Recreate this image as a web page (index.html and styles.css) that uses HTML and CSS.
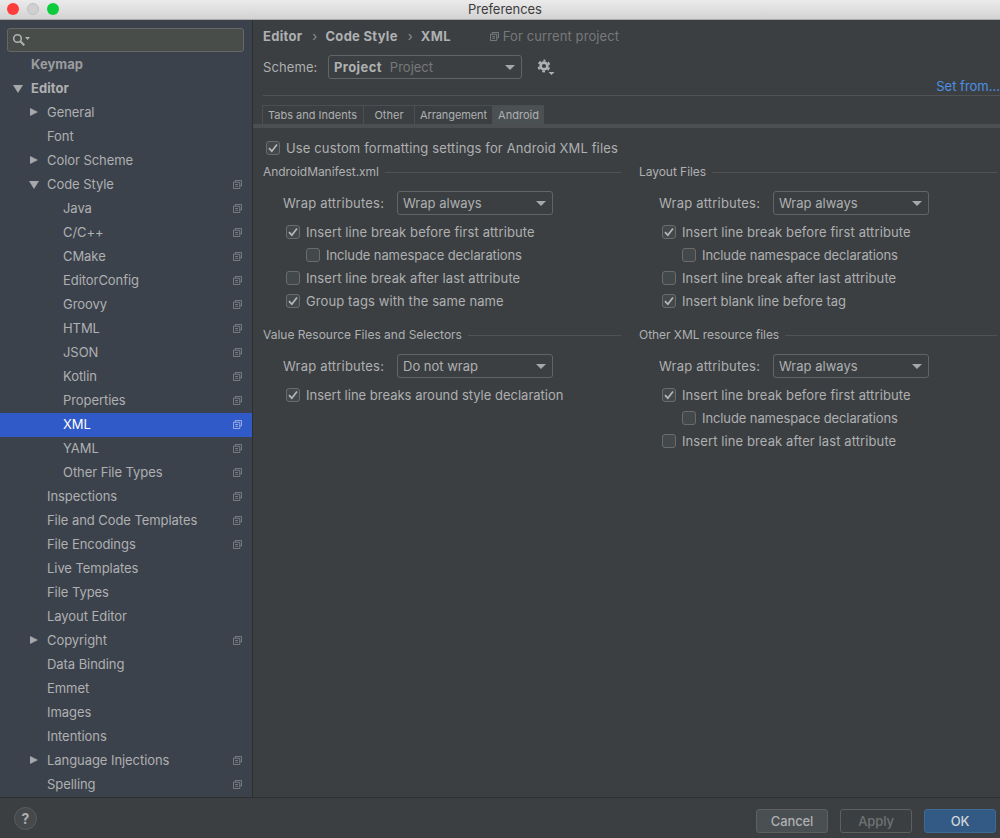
FILE: index.html
```html
<!DOCTYPE html>
<html lang="en">
<head>
    <meta charset="UTF-8">
    <meta name="viewport" content="width=device-width, initial-scale=1.0">
    <title>Preferences</title>
    <link rel="stylesheet" href="styles.css">
</head>
<body>
    <svg class="defs" width="0" height="0">
        <symbol id="copy" viewBox="0 0 10 10">
            <path d="M2.5 2.5V.5h7v6h-2M.5 2.5h7v7h-7zM2.5 5h3M2.5 7h3" fill="none" stroke="currentColor"/>
        </symbol>
        <symbol id="check" viewBox="0 0 14 14">
            <path d="M3 7.2l2.8 3L11 3.4" fill="none" stroke="#b5b7b9" stroke-width="1.7"/>
        </symbol>
    </svg>

    <header class="titlebar">
        <div class="lights">
            <span class="light red"></span>
            <span class="light grey"></span>
            <span class="light green"></span>
        </div>
        <div class="window-title">Preferences</div>
    </header>

    <div class="window-body">
        <aside class="sidebar">
            <div class="search">
                <svg width="18" height="14" viewBox="0 0 18 14">
                    <circle cx="5.5" cy="5.5" r="3.8" fill="none" stroke="#afb1b3" stroke-width="1.6"/>
                    <path d="M8.3 8.3l4 4" stroke="#afb1b3" stroke-width="2"/>
                    <path d="M13 4h5l-2.5 3z" fill="#afb1b3"/>
                </svg>
            </div>
            <ul class="tree">
                <li class="row lvl0 bold clipped">Keymap</li>
                <li class="row lvl0 bold"><i class="arrow down"></i>Editor</li>
                <li class="row lvl1"><i class="arrow"></i>General</li>
                <li class="row lvl1">Font</li>
                <li class="row lvl1"><i class="arrow"></i>Color Scheme</li>
                <li class="row lvl1"><i class="arrow down"></i>Code Style<svg class="copy"><use href="#copy"/></svg></li>
                <li class="row lvl2">Java<svg class="copy"><use href="#copy"/></svg></li>
                <li class="row lvl2">C/C++<svg class="copy"><use href="#copy"/></svg></li>
                <li class="row lvl2">CMake<svg class="copy"><use href="#copy"/></svg></li>
                <li class="row lvl2">EditorConfig<svg class="copy"><use href="#copy"/></svg></li>
                <li class="row lvl2">Groovy<svg class="copy"><use href="#copy"/></svg></li>
                <li class="row lvl2">HTML<svg class="copy"><use href="#copy"/></svg></li>
                <li class="row lvl2">JSON<svg class="copy"><use href="#copy"/></svg></li>
                <li class="row lvl2">Kotlin<svg class="copy"><use href="#copy"/></svg></li>
                <li class="row lvl2">Properties<svg class="copy"><use href="#copy"/></svg></li>
                <li class="row lvl2 selected">XML<svg class="copy"><use href="#copy"/></svg></li>
                <li class="row lvl2">YAML<svg class="copy"><use href="#copy"/></svg></li>
                <li class="row lvl2">Other File Types<svg class="copy"><use href="#copy"/></svg></li>
                <li class="row lvl1">Inspections<svg class="copy"><use href="#copy"/></svg></li>
                <li class="row lvl1">File and Code Templates<svg class="copy"><use href="#copy"/></svg></li>
                <li class="row lvl1">File Encodings<svg class="copy"><use href="#copy"/></svg></li>
                <li class="row lvl1">Live Templates</li>
                <li class="row lvl1">File Types</li>
                <li class="row lvl1">Layout Editor</li>
                <li class="row lvl1"><i class="arrow"></i>Copyright<svg class="copy"><use href="#copy"/></svg></li>
                <li class="row lvl1">Data Binding</li>
                <li class="row lvl1">Emmet</li>
                <li class="row lvl1">Images</li>
                <li class="row lvl1">Intentions</li>
                <li class="row lvl1"><i class="arrow"></i>Language Injections<svg class="copy"><use href="#copy"/></svg></li>
                <li class="row lvl1">Spelling<svg class="copy"><use href="#copy"/></svg></li>
            </ul>
        </aside>

        <main class="content">
            <div class="breadcrumbs">
                <b>Editor</b>
                <span class="crumb-sep">›</span>
                <b>Code Style</b>
                <span class="crumb-sep">›</span>
                <b>XML</b>
                <span class="for-project"><svg class="copy-small"><use href="#copy"/></svg>For current project</span>
            </div>

            <div class="scheme-row">
                <span class="scheme-label">Scheme:</span>
                <div class="combo scheme-combo"><b>Project</b><span class="muted">Project</span></div>
                <svg class="gear" width="20" height="20" viewBox="0 0 20 20">
                    <circle cx="8" cy="9" r="3.4" fill="none" stroke="#afb1b3" stroke-width="2.6"/>
                    <circle cx="8" cy="9" r="5.4" fill="none" stroke="#afb1b3" stroke-width="2" stroke-dasharray="2.8 2.85" stroke-dashoffset="1.4" transform="rotate(-90 8 9)"/>
                    <path fill="#afb1b3" d="M12.5 15h6l-3 3z"/>
                </svg>
            </div>

            <div class="set-from">Set from...</div>

            <div class="tabs">
                <span class="tab tab-first">Tabs and Indents</span>
                <span class="tab tab-other">Other</span>
                <span class="tab tab-arr">Arrangement</span>
                <span class="tab active">Android</span>
            </div>

            <label class="check top-check"><span class="box"><svg width="14" height="14"><use href="#check"/></svg></span>Use custom formatting settings for Android XML files</label>

            <div class="groups">
                <section class="group">
                    <h2 class="group-title">AndroidManifest.xml</h2>
                    <div class="wrap-row"><span class="wrap-label">Wrap attributes:</span><div class="combo wrap-combo">Wrap always</div></div>
                    <label class="check"><span class="box"><svg width="14" height="14"><use href="#check"/></svg></span>Insert line break before first attribute</label>
                    <label class="check nested"><span class="box"></span>Include namespace declarations</label>
                    <label class="check"><span class="box"></span>Insert line break after last attribute</label>
                    <label class="check"><span class="box"><svg width="14" height="14"><use href="#check"/></svg></span>Group tags with the same name</label>
                </section>
                <section class="group">
                    <h2 class="group-title">Layout Files</h2>
                    <div class="wrap-row"><span class="wrap-label">Wrap attributes:</span><div class="combo wrap-combo">Wrap always</div></div>
                    <label class="check"><span class="box"><svg width="14" height="14"><use href="#check"/></svg></span>Insert line break before first attribute</label>
                    <label class="check nested"><span class="box"></span>Include namespace declarations</label>
                    <label class="check"><span class="box"></span>Insert line break after last attribute</label>
                    <label class="check tight"><span class="box"><svg width="14" height="14"><use href="#check"/></svg></span>Insert blank line before tag</label>
                </section>
                <section class="group">
                    <h2 class="group-title tight">Value Resource Files and Selectors</h2>
                    <div class="wrap-row"><span class="wrap-label">Wrap attributes:</span><div class="combo wrap-combo">Do not wrap</div></div>
                    <label class="check tight"><span class="box"><svg width="14" height="14"><use href="#check"/></svg></span>Insert line breaks around style declaration</label>
                </section>
                <section class="group">
                    <h2 class="group-title">Other XML resource files</h2>
                    <div class="wrap-row"><span class="wrap-label">Wrap attributes:</span><div class="combo wrap-combo">Wrap always</div></div>
                    <label class="check"><span class="box"><svg width="14" height="14"><use href="#check"/></svg></span>Insert line break before first attribute</label>
                    <label class="check nested"><span class="box"></span>Include namespace declarations</label>
                    <label class="check"><span class="box"></span>Insert line break after last attribute</label>
                </section>
            </div>
        </main>
    </div>

    <footer class="footer">
        <div class="help">?</div>
        <div class="buttons">
            <button class="btn">Cancel</button>
            <button class="btn btn-disabled">Apply</button>
            <button class="btn btn-primary">OK</button>
        </div>
    </footer>
</body>
</html>
```

FILE: styles.css
```css
* {
    box-sizing: border-box;
}
html, body {
    height: 100%;
}
body {
    margin: 0;
    width: 1000px;
    height: 838px;
    overflow: hidden;
    display: flex;
    flex-direction: column;
    background: #3c3f41;
    color: #aeb0b2;
    font-family: 'Inter', 'Liberation Sans', sans-serif;
    font-size: 13px;
}
.defs {
    position: absolute;
}

/* title bar */
.titlebar {
    height: 20px;
    flex: none;
    display: flex;
    align-items: center;
    background: linear-gradient(#ebebeb, #d3d3d3);
    border-bottom: 1px solid #a9a9a9;
    padding-left: 7px;
}
.lights {
    display: flex;
    gap: 8px;
    width: 60px;
    margin-top: -2px;
}
.light {
    width: 12px;
    height: 12px;
    border-radius: 50%;
}
.red { background: #fc3d39; }
.grey { background: #d0d0d0; border: 1px solid #c0c0c0; }
.green { background: #0ccc3b; }
.window-title {
    flex: 1;
    text-align: center;
    color: #3c3c3c;
    font-size: 13px;
    letter-spacing: -0.05px;
    padding-left: 10px;
    margin-left: -67px;
    margin-top: -1px;
}

.window-body {
    flex: 1;
    display: flex;
    min-height: 0;
}

/* sidebar */
.sidebar {
    width: 253px;
    flex: none;
    background: #3c424b;
    border-right: 1px solid #2d2f30;
    padding-top: 8px;
}
.search {
    margin: 0 8px 1px 7px;
    height: 24px;
    background: #484d4a;
    border: 1px solid #646865;
    border-radius: 3px;
    display: flex;
    align-items: center;
    padding-left: 4px;
}
.tree {
    list-style: none;
    margin: 0;
    padding: 0;
    letter-spacing: -0.06px;
}
.row {
    height: 24px;
    line-height: 23px;
    position: relative;
    white-space: nowrap;
}
.lvl0 { padding-left: 31px; }
.lvl1 { padding-left: 47px; }
.lvl2 { padding-left: 63px; }
.bold {
    font-weight: 700;
    letter-spacing: 0.05px;
}
.clipped {
    color: #9a9c9e;
}
.selected {
    background: #2f5ac8;
    color: #fff;
}
.arrow {
    position: absolute;
    top: 7px;
    width: 0;
    height: 0;
    margin-left: -17px;
    border-style: solid;
    border-width: 4.5px 0 4.5px 8px;
    border-color: transparent transparent transparent #a5a7a9;
}
.arrow.down {
    top: 8px;
    margin-left: -18px;
    border-width: 8px 5px 0 5px;
    border-color: #a5a7a9 transparent transparent transparent;
}
.copy {
    position: absolute;
    right: 10px;
    top: 7px;
    width: 9px;
    height: 9px;
    color: #7d8388;
}
.selected .copy {
    color: #a3b6e6;
}

/* right panel */
.content {
    flex: 1;
    min-width: 0;
    padding: 0 3px 0 10px;
    letter-spacing: 0.1px;
}
.breadcrumbs {
    height: 32px;
    display: flex;
    align-items: center;
    white-space: nowrap;
}
.breadcrumbs b {
    font-weight: 700;
    letter-spacing: 0.3px;
}
.crumb-sep {
    margin: 0 8px 0 10px;
    color: #8d8f91;
}
.for-project {
    margin-left: 39px;
    color: #77797b;
    display: flex;
    align-items: center;
    gap: 4px;
}
.copy-small {
    width: 9px;
    height: 9px;
    color: #7f8386;
}
.scheme-row {
    display: flex;
    align-items: center;
    height: 24px;
    margin-top: 3px;
}
.scheme-label {
    width: 65px;
}
.combo {
    height: 24px;
    border: 1px solid #646464;
    border-radius: 3px;
    display: flex;
    align-items: center;
    padding-left: 5px;
    position: relative;
    white-space: nowrap;
    letter-spacing: 0;
}
.combo::after {
    content: "";
    position: absolute;
    right: 6px;
    top: 9px;
    border-style: solid;
    border-width: 5px 5px 0 5px;
    border-color: #a5a7a9 transparent transparent transparent;
}
.scheme-combo {
    width: 194px;
}
.scheme-combo b {
    letter-spacing: 0.4px;
}
.muted {
    color: #77797b;
    margin-left: 8px;
}
.gear {
    margin-left: 14px;
}
.set-from {
    text-align: right;
    color: #4d8fe6;
    height: 17px;
    line-height: 14px;
    margin-right: -3px;
    white-space: nowrap;
    border-bottom: 1px solid #505253;
    letter-spacing: 0;
}
.tabs {
    display: flex;
    height: 23px;
    margin: 9px 0 0 -1px;
    font-size: 11px;
    letter-spacing: 0;
    position: relative;
}
.tabs::after {
    content: "";
    position: absolute;
    left: -9px;
    right: -3px;
    top: 19px;
    height: 4px;
    background: #4b4f51;
}
.tab {
    height: 20px;
    line-height: 19px;
    border-left: 1px solid #4c4f51;
    border-top: 1px solid #4c4f51;
    white-space: nowrap;
    text-align: center;
}
.tab-first {
    width: 101px;
    text-align: left;
    padding-left: 5px;
}
.tab-other {
    width: 51px;
}
.tab-arr {
    width: 78px;
    letter-spacing: -0.1px;
}
.tab.active {
    width: 52px;
    background: #4b5052;
}
.check {
    display: flex;
    align-items: center;
    gap: 6px;
    height: 23px;
    white-space: nowrap;
    padding-left: 23px;
}
.box {
    width: 14px;
    height: 14px;
    flex: none;
    background: #43494a;
    border: 1px solid #6b6b6b;
    border-radius: 3px;
    display: flex;
}
.box svg {
    margin: -1px;
}
.top-check {
    height: 24px;
    margin-top: 8px;
    padding-left: 3px;
    letter-spacing: 0.13px;
}
.nested {
    padding-left: 43px;
    letter-spacing: -0.1px;
}
.groups {
    display: grid;
    grid-template-columns: 358px 358px;
    column-gap: 18px;
    grid-template-rows: 163px auto;
    margin-top: 4px;
}
.group-title {
    margin: 0;
    font-size: 12px;
    font-weight: 400;
    letter-spacing: -0.05px;
    height: 16px;
    line-height: 16px;
    display: flex;
    align-items: center;
    gap: 6px;
    white-space: nowrap;
}
.group-title::after {
    content: "";
    flex: 1;
    height: 1px;
    background: #505253;
}
.check.tight,
.group-title.tight {
    letter-spacing: 0;
}
.wrap-row {
    display: flex;
    align-items: center;
    height: 24px;
    padding-left: 20px;
    margin-top: 11px;
    margin-bottom: 5px;
}
.wrap-label {
    width: 114px;
    letter-spacing: 0.2px;
}
.wrap-combo {
    width: 156px;
}

/* bottom bar */
.footer {
    height: 41px;
    flex: none;
    border-top: 1px solid #2d2f30;
    display: flex;
    align-items: center;
    justify-content: space-between;
    padding: 0 4px 0 14px;
}
.help {
    width: 23px;
    height: 23px;
    border-radius: 50%;
    border: 1px solid #5a5d5f;
    background: #46494b;
    text-align: center;
    line-height: 21px;
    font-weight: 700;
    font-size: 14px;
    color: #aeb0b2;
}
.buttons {
    display: flex;
    gap: 12px;
    margin-top: 6px;
}
.btn {
    width: 72px;
    height: 24px;
    border-radius: 3px;
    border: 1px solid #5e6060;
    background: #4a4f51;
    color: #aeb0b2;
    font-family: inherit;
    font-size: 13px;
    font-weight: 500;
    letter-spacing: -0.1px;
    padding: 0;
}
.btn-disabled {
    background: transparent;
    color: #6f7173;
}
.btn-primary {
    background: #325a84;
    border-color: #3e6a96;
    color: #d0d4d8;
}
```
